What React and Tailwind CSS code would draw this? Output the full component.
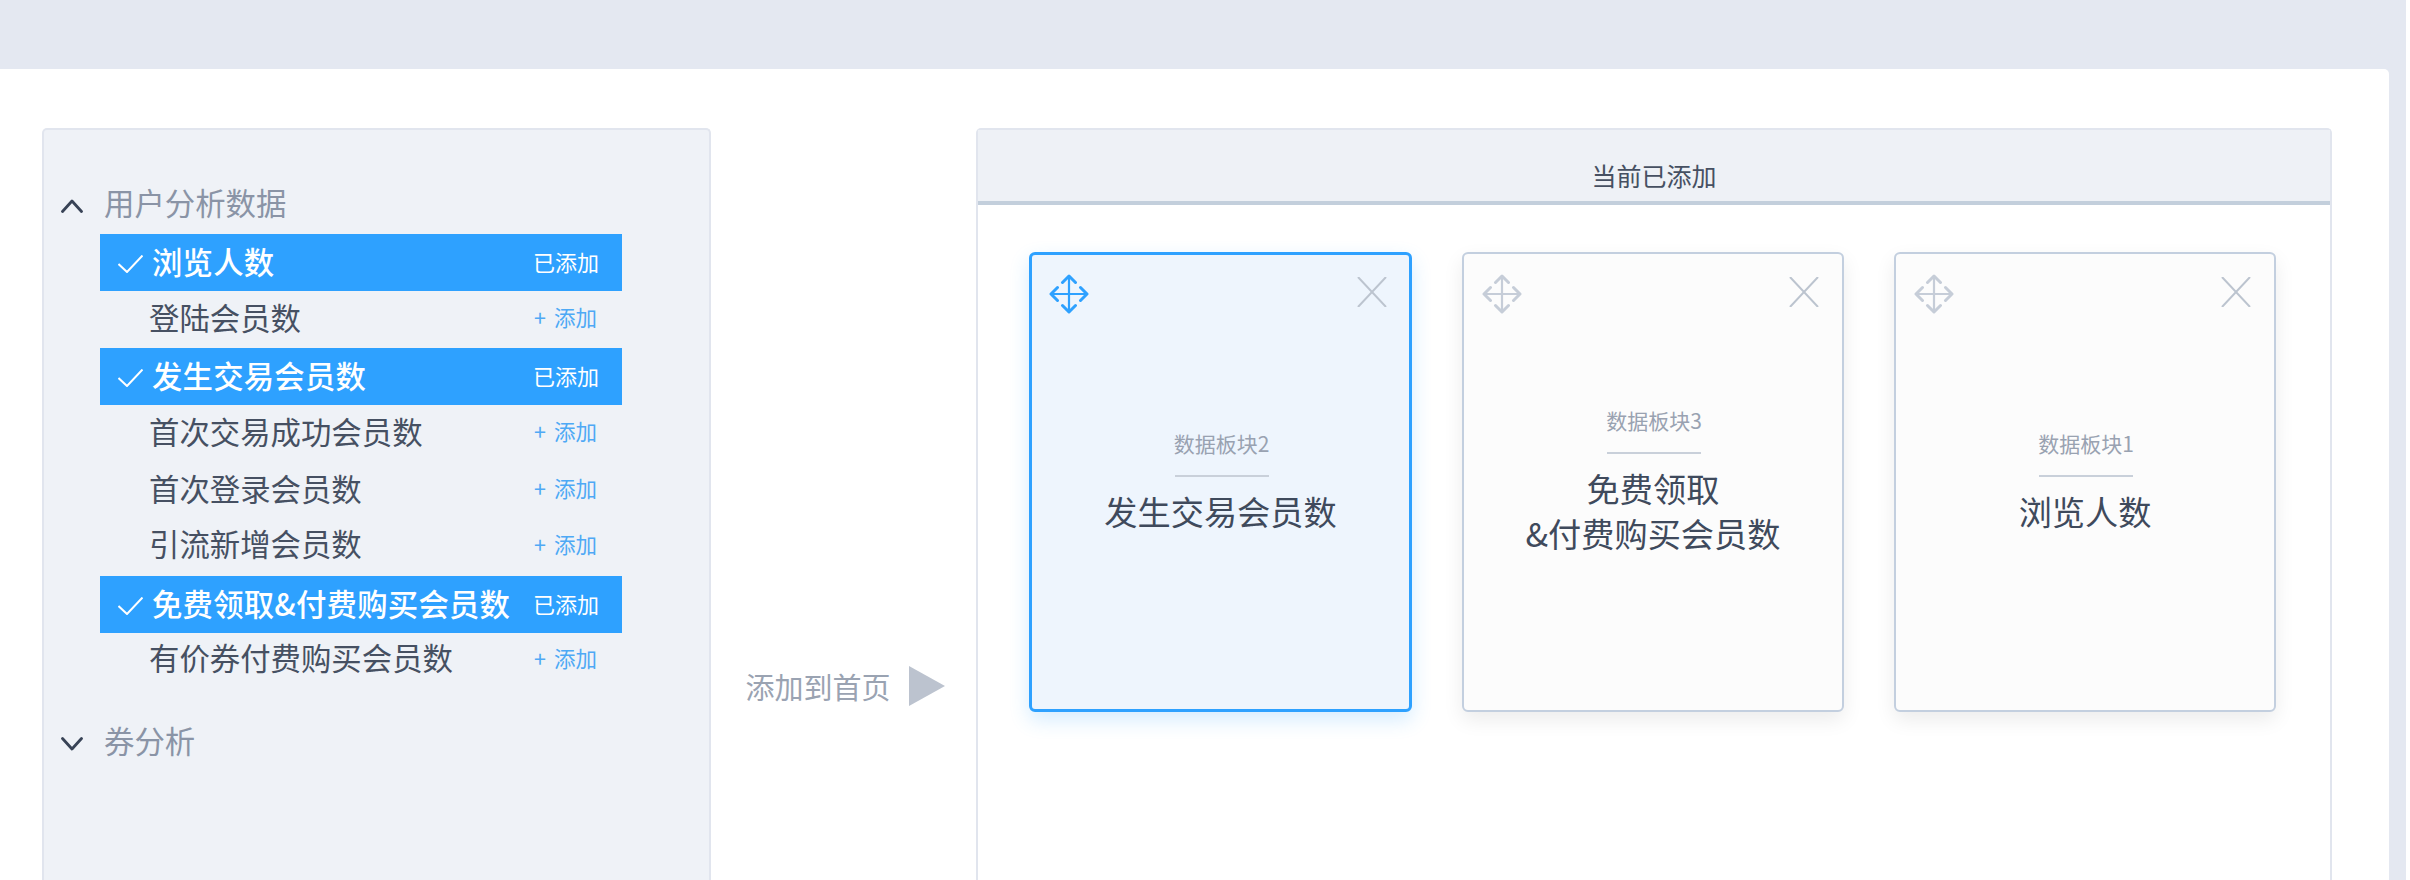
import React from 'react';

const rows = [
  { name: '浏览人数', added: true },
  { name: '登陆会员数' },
  { name: '发生交易会员数', added: true },
  { name: '首次交易成功会员数' },
  { name: '首次登录会员数' },
  { name: '引流新增会员数', tight: true },
  { name: '免费领取&付费购买会员数', added: true },
  { name: '有价券付费购买会员数', tight: true },
];

function MoveIcon({ active }) {
  return (
    <svg
      width="40"
      height="40"
      viewBox="0 0 40 40"
      fill="none"
      stroke={active ? '#2ea1ff' : '#c6cdd8'}
      strokeLinecap="round"
      strokeLinejoin="round"
    >
      <path strokeWidth="2.2" d="M20 2v36M2 20h36" />
      <path strokeWidth="3" d="M13.5 8.500l6.500-6.500 6.500 6.500M13.500 31.500l6.500 6.500 6.500-6.500M8.500 13.500l-6.500 6.500 6.500 6.500M31.500 13.500l6.500 6.500-6.500 6.500" />
    </svg>
  );
}

function CloseIcon() {
  return (
    <svg width="30" height="30" viewBox="0 0 30 30" fill="none" stroke="#bcc4cf" strokeWidth="2">
      <path d="M1 0l28 30M29 0L1 30" />
    </svg>
  );
}

function Card({ active, label, title }) {
  return (
    <div
      className={`relative flex h-[460px] flex-col items-center justify-center rounded-[6px] pb-[4px] ${
        active
          ? 'w-[383px] border-[3px] border-[#2ea1ff] bg-[#eef5fd] shadow-[0_8px_20px_rgba(46,161,255,0.2)]'
          : 'w-[382px] border-2 border-[#c3cfdf] bg-[#fcfcfc] shadow-[0_8px_20px_rgba(0,0,0,0.08)]'
      }`}
    >
      <div className={`absolute ${active ? 'left-[17px] top-[19px]' : 'left-[18px] top-[20px]'}`}>
        <MoveIcon active={active} />
      </div>
      <div className={`absolute ${active ? 'right-[22px] top-[22px]' : 'right-[23px] top-[23px]'}`}>
        <CloseIcon />
      </div>
      <div className="ml-[2px] text-[21px] leading-[30px] text-[#99a2b1]">{label}</div>
      <div className="mb-[11px] ml-[2px] mt-[17px] h-[2px] w-[94px] bg-[#c9d0da]" />
      <div className="whitespace-pre-line text-center text-[33.2px] leading-[45px] text-[#3f4a5c]">{title}</div>
    </div>
  );
}

function Chevron({ up }) {
  return (
    <svg width="22" height="14" viewBox="0 0 22 14" fill="none" stroke="#384356" strokeWidth="2.8" strokeLinecap="round" strokeLinejoin="round">
      <path d={up ? 'M1.500 12.500L11 2l9.500 10.500' : 'M1.500 1.500L11 12l9.500-10.500'} />
    </svg>
  );
}

export default function App() {
  return (
    <div className="h-[880px] w-[2410px] overflow-hidden bg-white font-['Noto_Sans_CJK_SC','Liberation_Sans',sans-serif]">
      <div className="h-[880px] w-[2406px] bg-[#e4e8f1] pt-[69px]">
        <div className="flex h-[811px] w-[2389px] rounded-tr-[5px] bg-white pl-[42px] pt-[59px]">
          {/* left list */}
          <div className="w-[669px] rounded-t-[5px] border-2 border-b-0 border-[#e1e5ee] bg-[#eff2f7] pt-[54px]">
            <div className="flex h-[44px] items-center">
              <div className="ml-[17px] w-[43px]">
                <Chevron up />
              </div>
              <span className="pb-[7px] text-[30.4px] text-[#8a94a6]">用户分析数据</span>
            </div>
            <div className="ml-[56px] mt-[6px] w-[522px]">
              {rows.map((row) =>
                row.added ? (
                  <div key={row.name} className="flex h-[57px] items-center justify-between bg-[#2ea1ff] pb-[2px] pl-[18px] pr-[23px] text-white">
                    <span className="flex items-center">
                      <svg className="mr-[9px] mt-[6px]" width="25" height="18" viewBox="0 0 25 18" fill="none" stroke="#fff" strokeWidth="2">
                        <path d="M0.500 9l8.500 8L24.500 0.500" />
                      </svg>
                      <span className="text-[30.4px] font-medium tracking-[0.2px]">{row.name}</span>
                    </span>
                    <span className="text-[22px]">已添加</span>
                  </div>
                ) : (
                  <div
                    key={row.name}
                    className={`flex h-[57px] items-center justify-between pl-[49px] pr-[25px] ${row.tight ? 'pb-[7px]' : 'pb-[4px]'}`}
                  >
                    <span className="text-[30.4px] text-[#465062]">{row.name}</span>
                    <span className="text-[21.500px] text-[#4ea9f5]">
                      <span className="mr-[8px]">+</span>添加
                    </span>
                  </div>
                )
              )}
            </div>
            <div className="mt-[32px] flex h-[44px] items-center">
              <div className="ml-[17px] w-[43px]">
                <Chevron />
              </div>
              <span className="pb-[6px] text-[30.4px] text-[#8a94a6]">券分析</span>
            </div>
          </div>

          {/* add button */}
          <div className="flex w-[265px] items-start justify-center pl-[3px] pt-[536px]">
            <span className="text-[29px] leading-[44px] text-[#9aa3b2]">添加到首页</span>
            <span className="ml-[18px] mt-[2px] h-0 w-0 border-y-[20px] border-l-[36px] border-y-transparent border-l-[#bcc3cf]" />
          </div>

          {/* current cards */}
          <div className="w-[1356px] rounded-t-[5px] border-2 border-b-0 border-[#e1e5ee]">
            <div className="flex h-[75px] items-end justify-center border-b-4 border-[#c3cfdc] bg-[#eef1f6] pb-[8px]">
              <span className="text-[25px] leading-[36px] text-[#465062]">当前已添加</span>
            </div>
            <div className="flex gap-[50px] pl-[51px] pt-[47px]">
              <Card active label="数据板块2" title="发生交易会员数" />
              <Card label="数据板块3" title={'免费领取\n&付费购买会员数'} />
              <Card label="数据板块1" title="浏览人数" />
            </div>
          </div>
        </div>
      </div>
    </div>
  );
}
